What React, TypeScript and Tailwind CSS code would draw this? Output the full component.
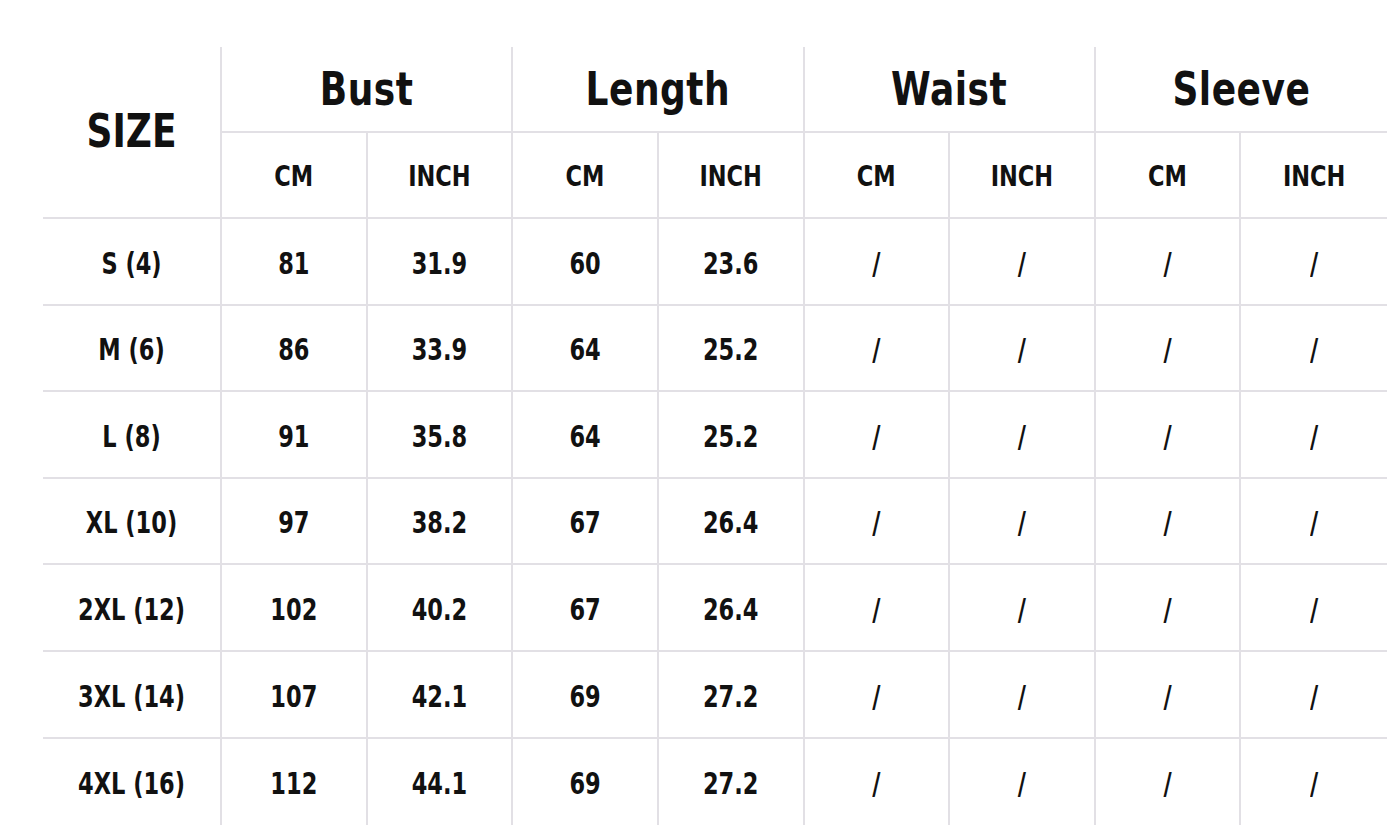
import React from "react";

const rows: [string, string, string, string, string][] = [
  ["S (4)", "81", "31.9", "60", "23.6"],
  ["M (6)", "86", "33.9", "64", "25.2"],
  ["L (8)", "91", "35.8", "64", "25.2"],
  ["XL (10)", "97", "38.2", "67", "26.4"],
  ["2XL (12)", "102", "40.2", "67", "26.4"],
  ["3XL (14)", "107", "42.1", "69", "27.2"],
  ["4XL (16)", "112", "44.1", "69", "27.2"],
];

const groups = ["Bust", "Length", "Waist", "Sleeve"];

export default function App() {
  const font = { fontFamily: '"DejaVu Sans Condensed", "DejaVu Sans", sans-serif' };
  return (
    <div className="w-[1400px] h-[840px] bg-white text-[#111] overflow-hidden" style={font}>
      <div className="ml-[43px] pt-[47px] w-[1344px]">
        <div className="grid grid-cols-[179px_repeat(8,minmax(0,1fr))] grid-rows-[86px_86px_repeat(7,86.6px)]">
          <div className="row-span-2 flex items-center justify-center border-r-2 border-b-2 border-[#e2e0e5] text-[40px] font-bold pb-[2px]">
            <span className="inline-block scale-y-[1.16]">SIZE</span>
          </div>
          {groups.map((g, i) => (
            <div
              key={g}
              className={
                "col-span-2 flex items-center justify-center border-b-2 border-[#e2e0e5] text-[40px] font-bold tracking-[0.5px] " +
                (i < 3 ? "border-r-2" : "")
              }
            >
              <span className="inline-block scale-y-[1.16]">{g}</span>
            </div>
          ))}
          {Array.from({ length: 8 }).map((_, i) => (
            <div
              key={"u" + i}
              className={
                "flex items-center justify-center pt-[4px] border-b-2 border-[#e2e0e5] text-[25px] font-bold " +
                (i < 7 ? "border-r-2" : "")
              }
            >
              <span className="inline-block scale-y-[1.16]">{i % 2 === 0 ? "CM" : "INCH"}</span>
            </div>
          ))}
          {rows.map((r, ri) => {
            const cells = [r[1], r[2], r[3], r[4], "/", "/", "/", "/"];
            const bb = ri < rows.length - 1 ? "border-b-2" : "";
            return (
              <React.Fragment key={r[0]}>
                <div className={"flex items-center justify-center pt-[6px] border-r-2 border-[#e2e0e5] text-[25px] font-bold " + bb}>
                  <span className="inline-block scale-y-[1.18]">{r[0]}</span>
                </div>
                {cells.map((c, ci) => (
                  <div
                    key={ci}
                    className={
                      "flex items-center justify-center pt-[6px] border-[#e2e0e5] text-[25px] font-bold " +
                      bb +
                      " " +
                      (ci < 7 ? "border-r-2" : "")
                    }
                  >
                    <span className="inline-block scale-y-[1.18]">{c}</span>
                  </div>
                ))}
              </React.Fragment>
            );
          })}
        </div>
      </div>
    </div>
  );
}
